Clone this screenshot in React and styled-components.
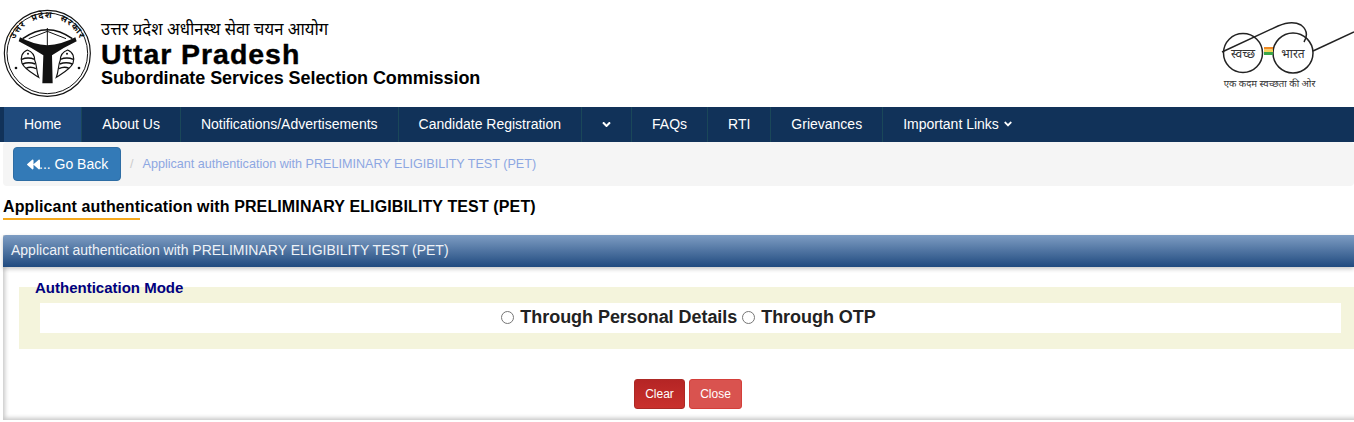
import React from 'react';
import styled, { createGlobalStyle } from 'styled-components';
import { FaBackward, FaAngleDown } from 'react-icons/fa';

const Global = createGlobalStyle`
  html, body {
    margin: 0;
    padding: 0;
    background: #fff;
    overflow: hidden;
    font-family: "Liberation Sans", Arial, sans-serif;
  }
  * { box-sizing: border-box; }
`;

/* header */

const Header = styled.header`
  display: flex;
  justify-content: space-between;
  height: 107px;
  overflow: hidden;
`;

const Brand = styled.div`
  display: flex;
`;

const BrandText = styled.div`
  display: flex;
  flex-direction: column;
  margin-left: 1px;
  padding-top: 22px;
  color: #000;
`;

const HindiName = styled.div`
  font-family: "Noto Sans Devanagari", "Noto Sans", "Liberation Serif", serif;
  font-size: 16.7px;
  line-height: 18px;
`;

const StateName = styled.div`
  font-size: 28.5px;
  font-weight: 700;
  letter-spacing: 0.95px;
  line-height: 28px;
  -webkit-text-stroke: 0.4px #000;
`;

const CommissionName = styled.div`
  font-size: 18px;
  font-weight: 700;
  letter-spacing: -0.07px;
  line-height: 20px;
`;

/* navigation */

const Nav = styled.nav`
  display: flex;
  height: 35px;
  padding-left: 4px;
  background: #113259;
`;

const NavItem = styled.a`
  display: flex;
  align-items: center;
  justify-content: center;
  gap: 3px;
  padding: 0 ${props => (props.$icon ? '0' : '20px')} 1px;
  width: ${props => (props.$icon ? '50px' : 'auto')};
  font-size: 14px;
  color: #fff;
  border-right: ${props => (props.$last ? '0' : '1px solid #1a4759')};
  background: ${props => (props.$active ? '#1f4a7c' : 'transparent')};
`;

/* breadcrumb */

const Crumbs = styled.div`
  display: flex;
  align-items: center;
  height: 44px;
  margin-left: 3px;
  padding-left: 10px;
  background: #f5f5f5;
  border-radius: 4px;
`;

const BackButton = styled.button`
  display: flex;
  align-items: center;
  width: 108px;
  height: 34px;
  padding: 0 0 0 13px;
  font-family: inherit;
  font-size: 14px;
  color: #fff;
  background: #337ab7;
  border: 1px solid #2e6da4;
  border-radius: 4px;
  svg { margin-right: -1px; }
`;

const Slash = styled.span`
  margin: 0 9px;
  font-size: 12.6px;
  color: #ccc;
`;

const CrumbLink = styled.span`
  font-size: 12.6px;
  color: #8da7e2;
`;

/* page title */

const Title = styled.h1`
  width: fit-content;
  margin: 12px 0 0 3px;
  font-size: 16px;
  letter-spacing: 0.12px;
  line-height: 18px;
  font-weight: 700;
  color: #000;
  &::after {
    content: '';
    display: block;
    width: 137px;
    height: 2px;
    margin-top: 2px;
    background: #f5a81c;
  }
`;

/* panel */

const Panel = styled.section`
  height: 185px;
  margin: 15px 0 0 3px;
  background: #fff;
  box-shadow: inset 4px -4px 4px -2px rgba(0, 0, 0, 0.22);
`;

const PanelHead = styled.div`
  display: flex;
  align-items: center;
  height: 32px;
  padding: 0 0 2px 8px;
  font-size: 14px;
  color: #eef2f7;
  background: linear-gradient(to bottom, #7e9dc3, #204a7f);
  border-radius: 3px 0 0 0;
  box-shadow: 0 2px 4px rgba(0, 0, 0, 0.22);
`;

const ModeBox = styled.fieldset`
  min-width: 0;
  margin: 11px 0 0 16px;
  padding: 7px 13px 16px 21px;
  border: 0;
  background: #f4f4dc;
`;

const ModeLegend = styled.legend`
  margin-left: -5px;
  padding: 2px 0 0;
  font-size: 15px;
  line-height: 16px;
  font-weight: 700;
  color: #000080;
`;

const ModeRow = styled.div`
  display: flex;
  align-items: center;
  justify-content: center;
  height: 30px;
  padding: 0 9px 2px 0;
  background: #fff;
`;

const ModeOption = styled.label`
  display: flex;
  align-items: center;
  font-size: 18px;
  font-weight: 700;
  letter-spacing: -0.05px;
  color: #222;
`;

const Radio = styled.input`
  width: 13px;
  height: 13px;
  margin: 1px 6px 0 5px;
`;

const Actions = styled.div`
  display: flex;
  justify-content: center;
  gap: 4px;
  margin-top: 30px;
  padding-left: 19px;
`;

const ActionButton = styled.button`
  height: 30px;
  width: ${props => (props.$danger ? '51px' : '53px')};
  padding: 0;
  font-family: inherit;
  font-size: 12px;
  color: #fff;
  border-radius: 3px;
  border: 1px solid ${props => (props.$danger ? '#ac2925' : '#d43f3a')};
  background: ${props => (props.$danger ? 'linear-gradient(to bottom, #b52525, #c9302c)' : '#d9534f')};
`;

/* drawings */

const EmblemSvg = styled.svg`
  display: block;
  flex-shrink: 0;
  width: 100px;
  height: 100px;
`;

const Fish = () => (
  <g>
    <path d="M82 150 C66 156 60 172 66 190 C74 208 94 218 116 232 C108 212 112 198 104 180 C104 166 98 156 82 150Z" fill="#fff" stroke="#111" strokeWidth="3.5" />
    <path d="M65 178 Q84 170 104 178 M68 192 Q86 184 106 192 M78 205 Q92 198 108 206" fill="none" stroke="#111" strokeWidth="4.5" />
    <circle cx="84" cy="161" r="3" fill="#111" />
  </g>
);

const Emblem = () => (
  <EmblemSvg viewBox="0 0 300 300">
    <circle cx="142" cy="160" r="129" fill="#fff" stroke="#111" strokeWidth="3.5" />
    <circle cx="142" cy="160" r="121" fill="none" stroke="#111" strokeWidth="3" />
    <defs>
      <path id="emblemRing" d="M 39 190 A 107 107 0 1 1 245 190" />
    </defs>
    <text fontFamily='"Noto Sans Devanagari", "Noto Sans", serif' fontSize="27" fontWeight="700" fill="#111" letterSpacing="3" wordSpacing="12">
      <textPath href="#emblemRing" startOffset="50%" textAnchor="middle">उत्तर प्रदेश सरकार</textPath>
    </text>
    <path d="M68 116 Q142 62 217 116" fill="none" stroke="#111" strokeWidth="4.5" />
    <path d="M86 116 L142 94 L198 116 M142 84 V138" fill="none" stroke="#111" strokeWidth="3" />
    <path d="M60 112 Q100 134 142 136 Q185 134 226 112 L230 124 Q188 144 156 166 L158 250 L127 250 L130 166 Q96 144 56 124 Z" fill="#111" />
    <Fish />
    <g transform="translate(285 0) scale(-1 1)">
      <Fish />
    </g>
    <circle cx="48" cy="204" r="4" fill="#111" />
    <circle cx="237" cy="204" r="4" fill="#111" />
  </EmblemSvg>
);

const SwachhSvg = styled.svg`
  display: block;
  flex-shrink: 0;
  width: 134px;
  height: 90px;
  margin-top: 10px;
`;

const SwachhLogo = () => (
  <SwachhSvg viewBox="0 0 134 90">
    <g fill="none" stroke="#222" strokeWidth="1.5">
      <circle cx="23" cy="43" r="19.5" />
      <circle cx="73" cy="43" r="20" />
      <path d="M2 42 L58 16 Q72 10 81 15 Q90 22 84 32" />
      <path d="M93 41 L134 22" />
    </g>
    <rect x="44" y="37" width="9" height="2.5" fill="#f08a24" />
    <rect x="44" y="39.5" width="9" height="2.5" fill="#f6d55c" />
    <rect x="44" y="42" width="9" height="3" fill="#3aa648" />
    <g fontFamily='"Noto Sans Devanagari", "Noto Sans", serif' fill="#333" textAnchor="middle">
      <text x="23" y="48" fontSize="12">स्वच्छ</text>
      <text x="73" y="48" fontSize="12">भारत</text>
      <text x="49.5" y="77" fontSize="9.6">एक कदम स्वच्छता की ओर</text>
    </g>
  </SwachhSvg>
);

const navItems = [
  'About Us',
  'Notifications/Advertisements',
  'Candidate Registration',
];

const App = () => (
  <>
    <Global />
    <Header>
      <Brand>
        <Emblem />
        <BrandText>
          <HindiName>उत्तर प्रदेश अधीनस्थ सेवा चयन आयोग</HindiName>
          <StateName>Uttar Pradesh</StateName>
          <CommissionName>Subordinate Services Selection Commission</CommissionName>
        </BrandText>
      </Brand>
      <SwachhLogo />
    </Header>
    <Nav>
      <NavItem $active>Home</NavItem>
      {navItems.map(name => <NavItem key={name}>{name}</NavItem>)}
      <NavItem $icon><FaAngleDown size={13} /></NavItem>
      <NavItem>FAQs</NavItem>
      <NavItem>RTI</NavItem>
      <NavItem>Grievances</NavItem>
      <NavItem $last>Important Links <FaAngleDown size={12} /></NavItem>
    </Nav>
    <Crumbs>
      <BackButton><FaBackward size={13} />... Go Back</BackButton>
      <Slash>/</Slash>
      <CrumbLink>Applicant authentication with PRELIMINARY ELIGIBILITY TEST (PET)</CrumbLink>
    </Crumbs>
    <Title>Applicant authentication with PRELIMINARY ELIGIBILITY TEST (PET)</Title>
    <Panel>
      <PanelHead>Applicant authentication with PRELIMINARY ELIGIBILITY TEST (PET)</PanelHead>
      <ModeBox>
        <ModeLegend>Authentication Mode</ModeLegend>
        <ModeRow>
          <ModeOption><Radio type="radio" name="mode" />Through Personal Details</ModeOption>
          <ModeOption><Radio type="radio" name="mode" />Through OTP</ModeOption>
        </ModeRow>
      </ModeBox>
      <Actions>
        <ActionButton $danger>Clear</ActionButton>
        <ActionButton>Close</ActionButton>
      </Actions>
    </Panel>
  </>
);

export default App;
